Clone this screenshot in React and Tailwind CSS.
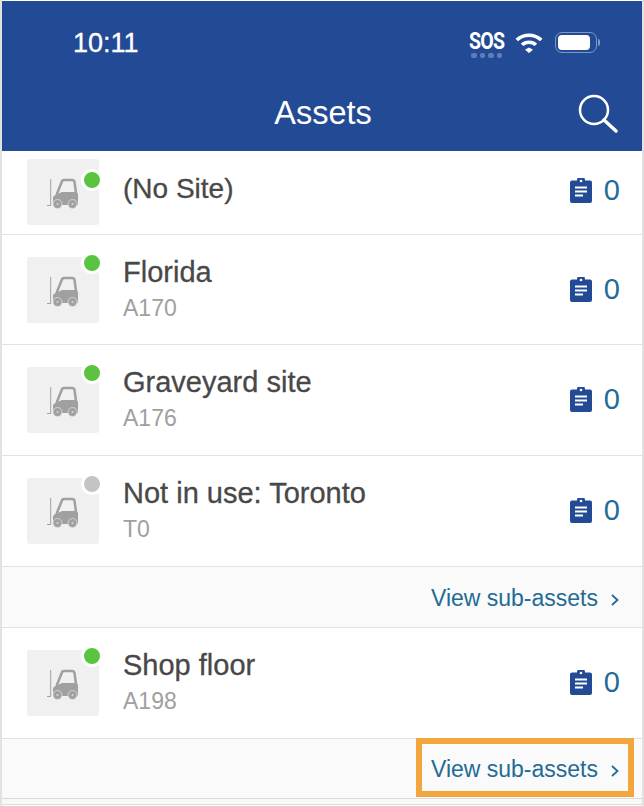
const FONT = "font-['Liberation_Sans',Arial,sans-serif]";

function Forklift() {
  return (
    <svg width="32" height="31" viewBox="0 0 32 31" className="text-[#a0a0a0]">
      <path d="M3.700 1v26.500H0" fill="none" stroke="currentColor" strokeWidth="1" />
      <path d="M9.500 17 14.500 4.500c.4-1.500 1.200-2.500 2.500-2.500h8c1.500 0 2.400.9 2.600 2.400L29 15" fill="none" stroke="currentColor" strokeWidth="2.500" />
      <path fill="currentColor" d="M6 26v-6c0-1.500 1-2.500 2.500-3l6-2.800c.5-.2 1-.2 1.500-.2h12.500c1.500 0 2.500 1 2.500 2.500V26c0 .7-.5 1-1 1H7c-.5 0-1-.3-1-1z" />
      <circle cx="10.500" cy="26" r="4.500" fill="currentColor" stroke="#e6e6e6" strokeWidth="0.700" />
      <circle cx="25.500" cy="26" r="4.500" fill="currentColor" stroke="#e6e6e6" strokeWidth="0.700" />
      <circle cx="10.500" cy="26" r="1" fill="#d8d8d8" />
      <circle cx="25.500" cy="26" r="1" fill="#d8d8d8" />
    </svg>
  );
}

function Clipboard() {
  return (
    <svg width="22" height="25" viewBox="0 0 22 25">
      <path fill="#234a94" d="M2 2.500h5a4 4 0 0 1 8 0h5a2 2 0 0 1 2 2V23a2 2 0 0 1-2 2H2a2 2 0 0 1-2-2V4.500a2 2 0 0 1 2-2z" />
      <circle cx="11" cy="3" r="1.300" fill="#fff" />
      <path stroke="#fff" strokeWidth="1.800" d="M5 9.500h12M5 13.500h12M5 17.500h8" />
    </svg>
  );
}

function Row({ name, code, active = true, first = false, tall = true }) {
  return (
    <div className={`flex border-b border-[#e2e2e2] pl-[25px] pr-[22px] ${first ? "h-[84px] pt-[8px]" : tall ? "h-[111px] pt-[22px]" : "h-[110px] pt-[22px]"}`}>
      <div className="relative flex h-[66px] w-[72px] shrink-0 items-center justify-center rounded-[3px] bg-[#f0f0f0]">
        <div className="mt-[2px]"><Forklift /></div>
        <div className={`absolute -right-[4px] h-[22px] w-[22px] rounded-full border-[3px] border-white ${first ? "top-[10px]" : "-top-[5px]"} ${active ? "bg-[#5ac440]" : "bg-[#c4c4c4]"}`} />
      </div>
      <div className={`ml-[24px] flex-1 ${first ? "pt-[14px]" : "-mt-[1px]"}`}>
        <div className={`leading-[32px] text-[#484848] [-webkit-text-stroke:0.3px_#484848] ${first ? "text-[28px]" : "text-[29px]"}`}>{name}</div>
        {code && <div className="mt-[7px] text-[23px] leading-[26px] text-[#a0a0a0]">{code}</div>}
      </div>
      <div className={`flex items-center gap-[12px] self-start ${first ? "mt-[15px]" : "mt-[16px]"}`}>
        <Clipboard />
        <span className="text-[29px] leading-[32px] text-[#236b96]">0</span>
      </div>
    </div>
  );
}

function SubAssets({ highlighted = false }) {
  return (
    <div className={`flex items-center justify-end bg-[#fafafa] pr-[22px] ${highlighted ? "h-[59px]" : "h-[61px] border-b border-[#e2e2e2] pt-[1px]"}`}>
      <span className="text-[23px] leading-[28px] text-[#236b96]">View sub-assets</span>
      <svg width="10" height="14" viewBox="0 0 10 14" className="ml-[12px] mt-[4px]">
        <path d="M2 2l5.500 5L2 12" fill="none" stroke="#236b96" strokeWidth="1.800" />
      </svg>
    </div>
  );
}

export default function App() {
  return (
    <div className={`${FONT} relative h-[806px] w-[644px] overflow-hidden border-x-[2px] border-[#e2e2e2] bg-white`}>
      <header className="mt-[1px] mr-[-2px] h-[150px] bg-[#234a94] text-white">
        <div className="flex h-[95px] items-start justify-between pl-[71px] pr-[44px] pt-[26px]">
          <span className="text-[27px] leading-[32px] [-webkit-text-stroke:0.3px_#fff]">10:11</span>
          <div className="flex items-start gap-[12px] pt-[5px]">
            <div className="flex w-[33px] flex-col items-center">
              <span className="whitespace-nowrap font-['Roboto',sans-serif] text-[23px] font-bold leading-[19px] tracking-[-1px] [transform:scaleX(0.85)]">SOS</span>
              <div className="mt-[2px] flex gap-[3px]">
                <i className="h-[5px] w-[5.500px] rounded-[2px] bg-[#5f7db8]" />
                <i className="h-[5px] w-[5.500px] rounded-[2px] bg-[#5f7db8]" />
                <i className="h-[5px] w-[5.500px] rounded-[2px] bg-[#5f7db8]" />
                <i className="h-[5px] w-[5.500px] rounded-[2px] bg-[#5f7db8]" />
              </div>
            </div>
            <svg width="28" height="20" viewBox="0 0 28 20" className="mt-[1px]">
              <path fill="#fff" d="M14 14.500l4 2.200-4 3.300-4-3.300zM14 7.500c3.300 0 6 1.200 8.200 3.200l-2.600 2.400C18 11.700 16.100 11 14 11s-4 .7-5.600 2.100l-2.600-2.400C8 8.700 10.700 7.500 14 7.500zM14 .5c5.200 0 10 2 13.500 5.300L25 8.200C22 5.500 18.200 4 14 4S6 5.500 3 8.200L.5 5.800C4 2.500 8.800.5 14 .5z" />
            </svg>
            <div className="flex items-center">
              <div className="flex h-[21px] w-[42px] items-center rounded-[7px] border-[1.500px] border-[#7f97c6] pl-[2px]">
                <div className="h-[15px] w-[32px] rounded-[4px] bg-white" />
              </div>
              <div className="ml-[1px] h-[7px] w-[2px] rounded-r-full bg-[#7f97c6]" />
            </div>
          </div>
        </div>
        <div className="relative text-center text-[32.500px] leading-[34px]">
          Assets
          <svg width="40" height="40" viewBox="0 0 40 40" className="absolute right-[26px] top-[-2px]">
            <circle cx="16" cy="16" r="14" fill="none" stroke="#fff" strokeWidth="2.500" />
            <path d="M26 26l12 11" stroke="#fff" strokeWidth="3.500" strokeLinecap="round" />
          </svg>
        </div>
      </header>
      <Row first name="(No Site)" />
      <Row tall={false} name="Florida" code="A170" />
      <Row name="Graveyard site" code="A176" />
      <Row name="Not in use: Toronto" code="T0" active={false} />
      <SubAssets />
      <Row name="Shop floor" code="A198" />
      <SubAssets highlighted />
      <div className="h-[7px] border-y border-[#dcdcdc] bg-[#f8f8f8]" />
      <div className="absolute left-[414px] top-[738px] h-[59px] w-[218px] border-[6px] border-[#f2a63d]" />
    </div>
  );
}
